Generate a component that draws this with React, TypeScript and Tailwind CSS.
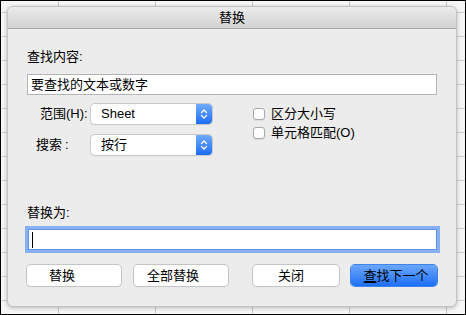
const font = "font-['Liberation_Sans','Noto_Sans_CJK_SC',sans-serif]";

function Chevrons() {
  return (
    <svg width="8" height="12" viewBox="0 0 8 12" fill="none" stroke="white" strokeWidth="1.3" strokeLinecap="round" strokeLinejoin="round">
      <path d="M1.5 4.5 L4 2 L6.5 4.5" />
      <path d="M1.5 7.5 L4 10 L6.5 7.5" />
    </svg>
  );
}

function Select({ value }: { value: string }) {
  return (
    <div className="flex h-[20px] w-[121px] overflow-hidden rounded-[4px] bg-white shadow-[0_0_0_1px_#c8c8c8,0_1px_1px_rgba(0,0,0,0.18)]">
      <span className="flex-1 pl-[10px] text-[13px] leading-[20px] text-black">{value}</span>
      <span className="flex w-[16px] items-center justify-center bg-gradient-to-b from-[#6eabfb] to-[#1c6cf2]">
        <Chevrons />
      </span>
    </div>
  );
}

function Checkbox({ label }: { label: React.ReactNode }) {
  return (
    <label className="flex h-[12px] items-center gap-[6px]">
      <span className="h-[12px] w-[12px] rounded-[3px] border border-[#a9a9a9] bg-white shadow-[0_1px_1px_rgba(0,0,0,0.08)]" />
      <span className="text-[13px] leading-[16px] text-black">{label}</span>
    </label>
  );
}

function Button({ children, className, primary }: { children: React.ReactNode; className?: string; primary?: boolean }) {
  return (
    <button
      className={
        'flex h-[21px] items-center justify-center rounded-[4px] text-[13px] leading-[16px] text-black ' +
        (primary
          ? 'bg-gradient-to-b from-[#6aa6f9] to-[#1b6ef4] shadow-[0_0_0_1px_#3f83ee]'
          : 'bg-white shadow-[0_0_0_1px_#c4c4c4,0_1px_1px_rgba(0,0,0,0.15)]') +
        ' ' +
        (className ?? '')
      }
    >
      {children}
    </button>
  );
}

export default function App() {
  return (
    <div
      className={`${font} h-[315px] w-[466px] overflow-hidden border border-black bg-[#f6f6f6] bg-[linear-gradient(to_right,#c9c9c9_1px,transparent_1px),linear-gradient(to_bottom,#cfcfcf_1px,transparent_1px)] bg-[size:97px_24px] bg-[position:57px_11px] pl-[6px] pt-[5px]`}
    >
      <div className="flex h-[301px] w-[450px] flex-col overflow-hidden rounded-[6px] border border-[#c2c2c2] bg-[#ececec] shadow-[0_1px_4px_rgba(0,0,0,0.25)]">
        {/* title bar */}
        <div className="flex h-[22px] shrink-0 items-center justify-center border-b border-[#a9a9a9] bg-gradient-to-b from-[#ebebeb] to-[#d2d2d2]">
          <span className="text-[13px] leading-[16px] text-black">替换</span>
        </div>

        <div className="flex flex-col px-[19px]">
          <div className="mt-[20px] text-[13px] leading-[16px] text-black">查找内容:</div>
          <div className="mt-[9px] flex h-[21px] w-[410px] items-center border border-[#b4b4b4] bg-white pl-[3px] text-[13px] text-black">
            要查找的文本或数字
          </div>

          <div className="flex">
            <div className="flex flex-col">
              <div className="mt-[9px] flex items-center">
                <span className="ml-[13px] w-[51px] text-[13px] leading-[16px] text-black">范围(H):</span>
                <Select value="Sheet" />
              </div>
              <div className="mt-[11px] flex items-center">
                <span className="ml-[9px] w-[55px] text-[13px] leading-[16px] text-black">
                  搜索<span className="ml-[3px]">:</span>
                </span>
                <Select value="按行" />
              </div>
            </div>
            <div className="ml-[41px] mt-[13px] flex flex-col gap-[7px]">
              <Checkbox label="区分大小写" />
              <Checkbox label="单元格匹配(O)" />
            </div>
          </div>

          <div className="mt-[50px] text-[13px] leading-[16px] text-black">替换为:</div>
          <div className="ml-[1px] mt-[8px] flex h-[21px] w-[409px] items-center border border-[#5f93e6] bg-white pl-[3px] shadow-[0_0_0_3px_#86b0f1]">
            <span className="h-[16px] w-px bg-black" />
          </div>

          <div className="mt-[15px] flex">
            <Button className="w-[94px] pr-[24px]">替换</Button>
            <Button className="ml-[13px] w-[94px] pr-[16px]">全部替换</Button>
            <Button className="ml-[25px] w-[86px] pr-[10px]">关闭</Button>
            <Button primary className="ml-[12px] w-[86px] pl-[4px]">
              <span className="underline underline-offset-2">查</span>找下一个
            </Button>
          </div>
        </div>
      </div>
    </div>
  );
}
